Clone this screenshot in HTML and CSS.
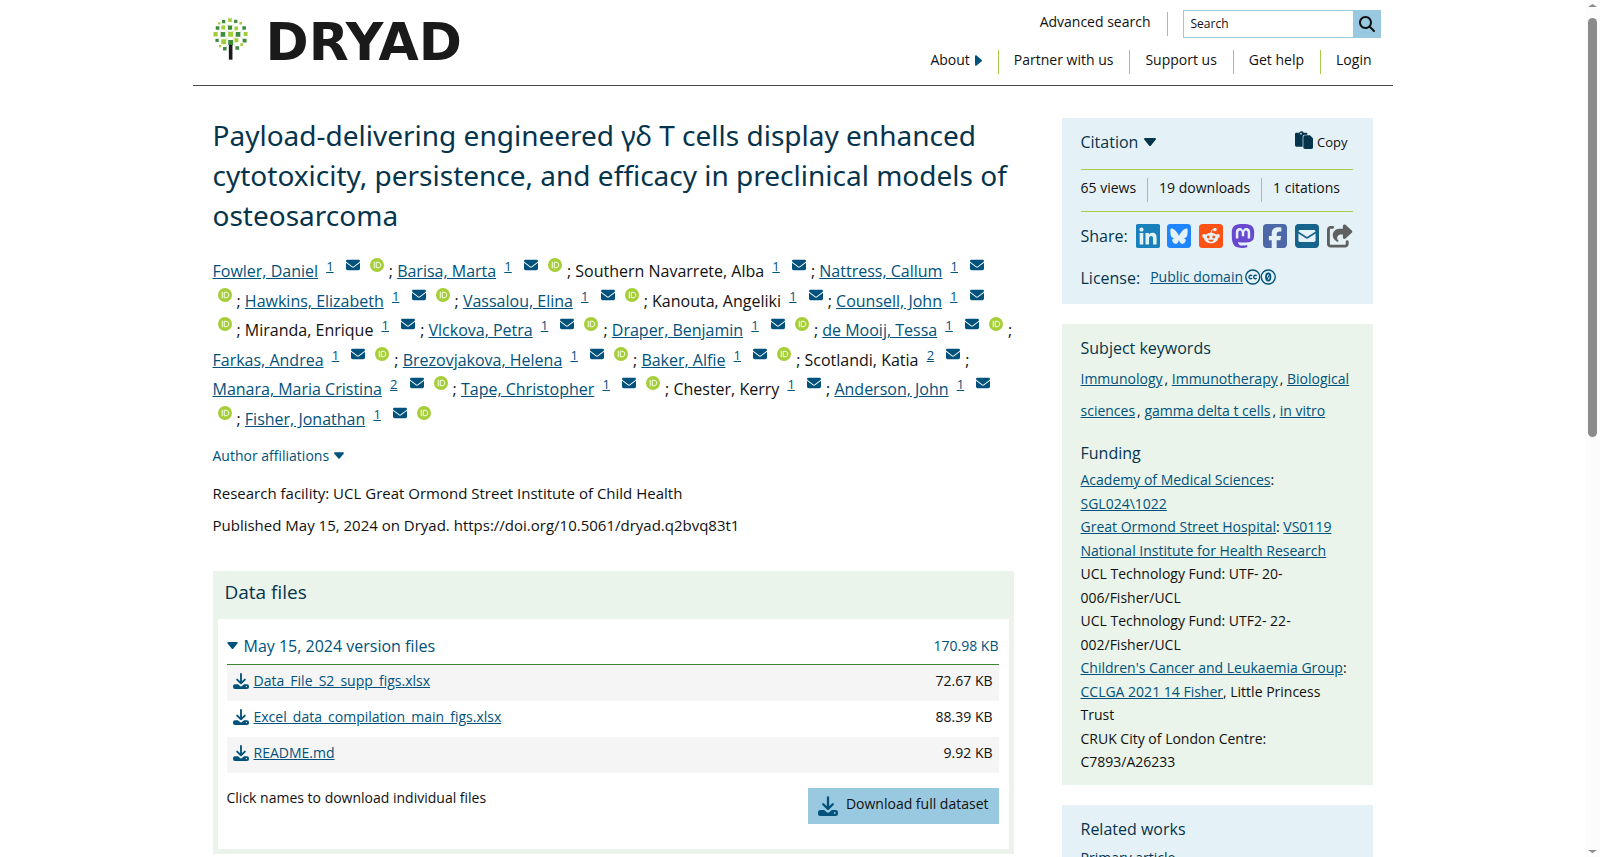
FILE: index.html
```html
<!DOCTYPE html>
<html lang="en">
<head>
<meta charset="utf-8">
<title>Dryad | Payload-delivering engineered γδ T cells</title>
<link rel="stylesheet" href="styles.css">
</head>
<body>
<svg class="sprite" aria-hidden="true">
  <symbol id="mail" viewBox="0 0 512 512"><path d="M48 64C21.5 64 0 85.5 0 112c0 15.1 7.1 29.3 19.2 38.4L236.8 313.6c11.4 8.5 27 8.5 38.4 0L492.8 150.4c12.1-9.1 19.2-23.3 19.2-38.4c0-26.5-21.5-48-48-48H48zM0 176V384c0 35.3 28.7 64 64 64H448c35.3 0 64-28.7 64-64V176L294.4 339.2c-22.8 17.1-54 17.1-76.8 0L0 176z"/></symbol>
  <symbol id="orcid" viewBox="0 0 28 28"><circle cx="14" cy="14" r="14" fill="#a6ce39"/><path d="M8.5 7.500v13M12.500 8.500v11h3.500c3.500 0 5.500-2.500 5.500-5.500s-2-5.500-5.500-5.500z" fill="none" stroke="#fff" stroke-width="1.800"/></symbol>
  <symbol id="down" viewBox="0 0 12 8"><path d="M1.200 0h9.600c1 0 1.500 1.100.8 1.800L7 7.400a1.300 1.300 0 0 1-2 0L.4 1.800C-.3 1.100.2 0 1.200 0z"/></symbol>
  <symbol id="right" viewBox="0 0 8 12"><path d="M0 1.200v9.600c0 1 1.100 1.500 1.800.8L7.400 7a1.300 1.300 0 0 0 0-2L1.800.4C1.100-.3 0 .2 0 1.200z"/></symbol>
  <symbol id="download" viewBox="0 0 20 20"><path d="M10 1.300v11M5.200 8.200l4.800 4.700 4.800-4.700" fill="none" stroke="currentColor" stroke-width="2.300" stroke-linecap="round" stroke-linejoin="round"/><path fill-rule="evenodd" d="M2.500 14h3.700l2.200 2a2.300 2.300 0 0 0 3.200 0l2.200-2h3.700A2.500 2.500 0 0 1 20 16.500v1a2.500 2.500 0 0 1-2.500 2.500h-15A2.500 2.500 0 0 1 0 17.500v-1A2.500 2.500 0 0 1 2.500 14zm14.300 2.100a.9.9 0 1 0 0 1.800.9.9 0 0 0 0-1.800z"/></symbol>
</svg>

<div class="viewport">
<div class="page">
<header class="header">
  <a class="logo" href="#" aria-label="Dryad home">
    <svg class="tree" viewBox="23 23 106 128" aria-hidden="true">
      <path d="M36 53L54 72 76 97 99 73 117 54M55 34L76 53 92 34M36 91L55 73M119 92L99 73M54 52L76 72 94 54M55 95L76 72 94 91M58 116L76 97 96 114" fill="none" stroke="#8fbf6a" stroke-width="1"/>
      <path fill="#a5cd39" d="M69 24h11v11h-11zM38 36h7v7h-7zM103 35h8v8h-8zM48 46h12v12h-12zM88 49h11v11h-11zM24 66h13v13h-13zM69 65h15v15h-15zM116 66h12v12h-12zM48 88h15v15h-15zM88 85h12v12h-12zM106 100h8v8h-8zM41 105h7v7h-7z"/>
      <path fill="#3e8b40" d="M50 29h10v10h-10zM87 28h10v10h-10zM31 48h11v11h-11zM68 46h13v13h-13zM112 48h11v11h-11zM46 66h14v14h-14zM92 66h14v14h-14zM30 86h10v10h-10zM69 90h15v15h-15zM113 86h12v12h-12zM53 111h11v11h-11zM91 109h11v11h-11z"/>
      <path fill="#1a1a1a" d="M71 105h11v45h-11z"/>
    </svg>
    <span class="wordmark">DRYAD</span>
  </a>
  <nav class="menus" aria-label="Main">
    <div class="row top">
      <a href="#">Advanced search</a>
      <form class="search">
        <input type="text" placeholder="Search" aria-label="Search">
        <button type="button" aria-label="Submit search"><svg viewBox="0 0 512 512"><path d="M416 208c0 45.900-14.900 88.300-40 122.700L502.600 457.400c12.500 12.500 12.500 32.800 0 45.300s-32.800 12.500-45.300 0L330.700 376c-34.400 25.200-76.800 40-122.700 40C93.100 416 0 322.900 0 208S93.100 0 208 0S416 93.100 416 208zM208 352a144 144 0 1 0 0-288 144 144 0 1 0 0 288z"/></svg></button>
      </form>
    </div>
    <div class="row bottom">
      <button type="button" class="about">About <svg><use href="#right"/></svg></button>
      <a href="#">Partner with us</a>
      <a href="#">Support us</a>
      <a href="#">Get help</a>
      <a href="#">Login</a>
    </div>
  </nav>
</header>

<div class="columns">
<main class="main">
  <h1>Payload-delivering engineered γδ T cells display enhanced cytotoxicity, persistence, and efficacy in preclinical models of osteosarcoma</h1>
  <p class="authors">
    <a href="#">Fowler, Daniel</a> <sup><a href="#">1</a></sup> <svg class="m"><use href="#mail"/></svg><span class="end"><svg class="o"><use href="#orcid"/></svg>;</span>
    <a href="#">Barisa, Marta</a> <sup><a href="#">1</a></sup> <svg class="m"><use href="#mail"/></svg><span class="end"><svg class="o"><use href="#orcid"/></svg>;</span>
    Southern Navarrete, Alba <sup><a href="#">1</a></sup> <span class="end"><svg class="m"><use href="#mail"/></svg>;</span>
    <a href="#">Nattress, Callum</a> <sup><a href="#">1</a></sup> <svg class="m"><use href="#mail"/></svg><span class="end"><svg class="o"><use href="#orcid"/></svg>;</span>
    <a href="#">Hawkins, Elizabeth</a> <sup><a href="#">1</a></sup> <svg class="m"><use href="#mail"/></svg><span class="end"><svg class="o"><use href="#orcid"/></svg>;</span>
    <a href="#">Vassalou, Elina</a> <sup><a href="#">1</a></sup> <svg class="m"><use href="#mail"/></svg><span class="end"><svg class="o"><use href="#orcid"/></svg>;</span>
    Kanouta, Angeliki <sup><a href="#">1</a></sup> <span class="end"><svg class="m"><use href="#mail"/></svg>;</span>
    <a href="#">Counsell, John</a> <sup><a href="#">1</a></sup> <svg class="m"><use href="#mail"/></svg><br><span class="end"><svg class="o"><use href="#orcid"/></svg>;</span>
    Miranda, Enrique <sup><a href="#">1</a></sup> <span class="end"><svg class="m"><use href="#mail"/></svg>;</span>
    <a href="#">Vlckova, Petra</a> <sup><a href="#">1</a></sup> <svg class="m"><use href="#mail"/></svg><span class="end"><svg class="o"><use href="#orcid"/></svg>;</span>
    <a href="#">Draper, Benjamin</a> <sup><a href="#">1</a></sup> <svg class="m"><use href="#mail"/></svg><span class="end"><svg class="o"><use href="#orcid"/></svg>;</span>
    <a href="#">de Mooij, Tessa</a> <sup><a href="#">1</a></sup> <svg class="m"><use href="#mail"/></svg><span class="end"><svg class="o"><use href="#orcid"/></svg>;</span>
    <a href="#">Farkas, Andrea</a> <sup><a href="#">1</a></sup> <svg class="m"><use href="#mail"/></svg><span class="end"><svg class="o"><use href="#orcid"/></svg>;</span>
    <a href="#">Brezovjakova, Helena</a> <sup><a href="#">1</a></sup> <svg class="m"><use href="#mail"/></svg><span class="end"><svg class="o"><use href="#orcid"/></svg>;</span>
    <a href="#">Baker, Alfie</a> <sup><a href="#">1</a></sup> <svg class="m"><use href="#mail"/></svg><span class="end"><svg class="o"><use href="#orcid"/></svg>;</span>
    Scotlandi, Katia <sup><a href="#">2</a></sup> <span class="end"><svg class="m"><use href="#mail"/></svg>;</span>
    <a href="#">Manara, Maria Cristina</a> <sup><a href="#">2</a></sup> <svg class="m"><use href="#mail"/></svg><span class="end"><svg class="o"><use href="#orcid"/></svg>;</span>
    <a href="#">Tape, Christopher</a> <sup><a href="#">1</a></sup> <svg class="m"><use href="#mail"/></svg><span class="end"><svg class="o"><use href="#orcid"/></svg>;</span>
    Chester, Kerry <sup><a href="#">1</a></sup> <span class="end"><svg class="m"><use href="#mail"/></svg>;</span>
    <a href="#">Anderson, John</a> <sup><a href="#">1</a></sup> <svg class="m"><use href="#mail"/></svg><span class="end"><svg class="o"><use href="#orcid"/></svg>;</span>
    <a href="#">Fisher, Jonathan</a> <sup><a href="#">1</a></sup> <svg class="m"><use href="#mail"/></svg><svg class="o"><use href="#orcid"/></svg>
  </p>
  <button type="button" class="affil">Author affiliations <svg><use href="#down"/></svg></button>
  <p class="meta">Research facility: UCL Great Ormond Street Institute of Child Health</p>
  <p class="meta">Published May 15, 2024 on Dryad. https://doi.org/10.5061/dryad.q2bvq83t1</p>

  <section class="files">
    <h2>Data files</h2>
    <div class="filebox">
      <button type="button" class="version"><svg><use href="#down"/></svg><span>May 15, 2024 version files</span><span class="total">170.98 KB</span></button>
      <table>
        <tr><td><a href="#"><svg><use href="#download"/></svg><span>Data_File_S2_supp_figs.xlsx</span></a></td><td class="size">72.67 KB</td></tr>
        <tr><td><a href="#"><svg><use href="#download"/></svg><span>Excel_data_compilation_main_figs.xlsx</span></a></td><td class="size">88.39 KB</td></tr>
        <tr><td><a href="#"><svg><use href="#download"/></svg><span>README.md</span></a></td><td class="size">9.92 KB</td></tr>
      </table>
      <div class="actions">
        <p>Click names to download individual files</p>
        <button type="button" class="full"><svg><use href="#download"/></svg>Download full dataset</button>
      </div>
    </div>
  </section>
</main>

<aside class="side">
  <section class="card blue">
    <div class="cite">
      <button type="button" class="citation">Citation <svg><use href="#down"/></svg></button>
      <button type="button" class="copy"><svg viewBox="0 0 54 54"><path d="M4 5h9a7 7 0 0 1 13 0h8q3 0 3 3v3H29q-6 0-6 6v30H4q-4 0-4-4V9q0-4 4-4z"/><circle cx="18" cy="8" r="2.500" fill="#e4f1f7"/><path d="M30 13h15l9 9v27q0 5-5 5H30q-5 0-5-5V18q0-5 5-5z"/></svg>Copy</button>
    </div>
    <div class="stats"><span>65 views</span><span>19 downloads</span><span>1 citations</span></div>
    <div class="share">
      <h3>Share:</h3>
      <a class="linkedin" href="#" aria-label="LinkedIn"><svg viewBox="0 32 448 448"><path d="M416 32H31.900C14.300 32 0 46.500 0 64.300v383.400C0 465.500 14.300 480 31.900 480H416c17.600 0 32-14.500 32-32.300V64.300c0-17.800-14.400-32.300-32-32.300zM135.400 416H69V202.200h66.500V416zm-33.200-243c-21.300 0-38.500-17.300-38.500-38.500S80.900 96 102.200 96c21.200 0 38.500 17.300 38.500 38.500 0 21.300-17.200 38.500-38.500 38.500zm282.100 243h-66.400V312c0-24.800-.5-56.700-34.500-56.700-34.600 0-39.900 27-39.900 54.900V416h-66.400V202.200h63.700v29.200h.9c8.900-16.800 30.600-34.500 62.900-34.500 67.200 0 79.700 44.300 79.700 101.900V416z"/></svg></a>
      <a href="#" aria-label="Bluesky"><svg viewBox="0 0 448 448"><rect width="448" height="448" rx="64" fill="#1f86ff"/><path transform="translate(60 64) scale(.64)" fill="#e4f1f7" d="M111.800 62.200C170.200 105.900 233 194.700 256 242.400c23-47.600 85.800-136.400 144.200-180.200c42.100-31.600 110.300-56 110.300 21.800c0 15.500-8.900 130.500-14.100 149.200C478.200 298 412 314.600 353.100 304.500c102.900 17.500 129.100 75.500 72.500 133.500c-107.400 110.200-154.300-27.600-166.300-62.900c-1.700-4.900-2.600-7.800-3.300-7.800s-1.600 3-3.300 7.800c-12 35.300-59 173.100-166.300 62.900c-56.500-58-30.400-116 72.500-133.500C100 314.600 33.800 298 15.700 233.100C10.400 214.400 1.500 99.400 1.500 83.900c0-77.800 68.200-53.400 110.300-21.800z"/></svg></a>
      <a href="#" aria-label="Reddit"><svg viewBox="0 0 24 24"><rect width="24" height="24" rx="3.500" fill="#ff5216"/><g fill="#e4f1f7"><ellipse cx="12" cy="14" rx="7" ry="5.300"/><circle cx="5.200" cy="12" r="2"/><circle cx="18.800" cy="12" r="2"/><circle cx="16" cy="5.500" r="1.700"/></g><path d="M12 9q0-3.500 3-3.800" fill="none" stroke="#e4f1f7" stroke-width="1"/><circle cx="9.300" cy="13" r="1.400" fill="#ff5216"/><circle cx="14.700" cy="13" r="1.400" fill="#ff5216"/><path d="M9 15.800h6q-.8 1.900-3 1.900t-3-1.900z" fill="#ff5216"/></svg></a>
      <a class="mastodon" href="#" aria-label="Mastodon"><svg viewBox="0 32 448 448"><path d="M433 179.110c0-97.200-63.710-125.700-63.710-125.700-62.520-28.700-228.560-28.400-290.480 0 0 0-63.720 28.500-63.720 125.700 0 115.700-6.600 259.400 105.630 289.100 40.510 10.700 75.320 13 103.330 11.400 50.810-2.800 79.320-18.100 79.320-18.100l-1.700-36.900s-36.310 11.400-77.120 10.100c-40.410-1.400-83-4.400-89.630-54a102.540 102.540 0 0 1-.9-13.900c85.630 20.900 158.650 9.100 178.750 6.700 56.120-6.700 105-41.300 111.230-72.900 9.800-49.800 9-121.500 9-121.500zm-75.120 125.200h-46.630v-114.200c0-49.700-64-51.600-64 6.900v62.500h-46.330V197c0-58.500-64-56.600-64-6.900v114.200H90.190c0-122.100-5.200-147.900 18.410-175 25.900-28.900 79.820-30.800 103.830 6.100l11.600 19.500 11.600-19.500c24.110-37.100 78.120-34.800 103.830-6.100 23.710 27.300 18.400 53 18.400 175z"/></svg></a>
      <a class="facebook" href="#" aria-label="Facebook"><svg viewBox="0 32 448 448"><path d="M64 32C28.700 32 0 60.700 0 96V416c0 35.300 28.700 64 64 64h98.200V334.200H109.400V256h52.800V222.300c0-87.100 39.400-127.500 125-127.500c16.200 0 44.200 3.200 55.700 6.400V172c-6-.6-16.500-1-29.600-1c-42 0-58.200 15.900-58.200 57.200V256h83.600l-14.400 78.200H255V480H384c35.300 0 64-28.700 64-64V96c0-35.300-28.700-64-64-64H64z"/></svg></a>
      <a class="email" href="#" aria-label="Email"><svg viewBox="0 32 448 448"><path d="M64 32C28.700 32 0 60.700 0 96V416c0 35.300 28.700 64 64 64H384c35.300 0 64-28.700 64-64V96c0-35.300-28.700-64-64-64H64zM218 271.700L64.200 172.400C66 156.400 79.500 144 96 144H352c16.500 0 30 12.400 31.800 28.400L230 271.700c-1.800 1.200-3.900 1.800-6 1.800s-4.200-.6-6-1.800zm29.400 26.900L384 210.400V336c0 17.700-14.300 32-32 32H96c-17.700 0-32-14.300-32-32V210.400l136.600 88.200c7 4.500 15.100 6.900 23.400 6.900s16.400-2.400 23.400-6.900z"/></svg></a>
      <a class="more" href="#" aria-label="More sharing options"><svg viewBox="0 0 576 512"><path d="M352 224H305.500c-45 0-81.500 36.500-81.500 81.500c0 22.300 10.300 34.300 19.200 40.500c6.800 4.700 12.800 12 12.800 20.300c0 9.800-8 17.800-17.800 17.800h-2.500c-2.400 0-4.800-.4-7.100-1.400C210.800 374.800 128 333.400 128 240c0-79.500 64.500-144 144-144h80V34.700C352 15.500 367.500 0 386.700 0c8.600 0 16.800 3.200 23.200 8.900L548.100 133.300c7.600 6.800 11.900 16.500 11.900 26.700s-4.300 19.900-11.900 26.700l-139 125.100c-5.900 5.300-13.500 8.200-21.400 8.200H384c-17.700 0-32-14.300-32-32V224zM80 96c-8.800 0-16 7.200-16 16V432c0 8.800 7.200 16 16 16H400c8.800 0 16-7.200 16-16V384c0-17.700 14.300-32 32-32s32 14.300 32 32v48c0 44.200-35.800 80-80 80H80c-44.200 0-80-35.800-80-80V112C0 67.800 35.800 32 80 32h48c17.700 0 32 14.300 32 32s-14.300 32-32 32H80z"/></svg></a>
    </div>
    <div class="license">
      <h3>License:</h3>
      <a href="#"><span>Public domain</span><svg viewBox="0 0 32 16" aria-hidden="true"><g fill="none" stroke="#00527c"><circle cx="8" cy="8" r="7.200" stroke-width="1.400"/><path d="M7.300 6.800a1.800 1.800 0 1 0 0 2.400M12.100 6.800a1.800 1.800 0 1 0 0 2.400" stroke-width="1.400"/><circle cx="24" cy="8" r="7.200" stroke-width="1.400"/><ellipse cx="24" cy="8" rx="2.300" ry="3.700" stroke-width="1.800"/><path d="M22.800 10l2.400-4" stroke-width="1.200"/></g></svg></a>
    </div>
  </section>

  <section class="card green">
    <h3>Subject keywords</h3>
    <p class="keywords"><a href="#">Immunology</a>, <a href="#">Immunotherapy</a>, <a href="#">Biological sciences</a>, <a href="#">gamma delta t cells</a>, <a href="#">in vitro</a></p>
    <h3>Funding</h3>
    <ul class="funding">
      <li><a href="#">Academy of Medical Sciences</a>: <a href="#">SGL024\1022</a></li>
      <li><a href="#">Great Ormond Street Hospital</a>: <a href="#">VS0119</a></li>
      <li><a href="#">National Institute for Health Research</a></li>
      <li>UCL Technology Fund: UTF- 20-006/Fisher/UCL</li>
      <li>UCL Technology Fund: UTF2- 22-002/Fisher/UCL</li>
      <li><a href="#">Children's Cancer and Leukaemia Group</a>: <a href="#">CCLGA 2021 14 Fisher</a>, Little Princess Trust</li>
      <li>CRUK City of London Centre: C7893/A26233</li>
    </ul>
  </section>

  <section class="card blue">
    <h3>Related works</h3>
    <h4>Primary article</h4>
  </section>
</aside>
</div>
</div>
<div class="scroll" aria-hidden="true">
  <svg viewBox="0 0 9 3"><path d="M0 3L4.500 0 9 3z"/></svg>
  <div class="track"><div class="thumb"></div></div>
  <svg viewBox="0 0 9 3"><path d="M0 0L4.500 3 9 0z"/></svg>
</div>
</div>
</body>
</html>
```
FILE: styles.css
```css
* { box-sizing: border-box; }

body {
  margin: 0;
  background: #fff;
  color: #111;
  font: 14px/24px "Open Sans", "Noto Sans", sans-serif;
}

h1, h2, h3, h4, p, ul, form { margin: 0; padding: 0; font-weight: 400; }
a { color: #00527c; }
svg { fill: currentColor; flex: none; }
button {
  margin: 0;
  padding: 0;
  border: 0;
  background: none;
  color: inherit;
  font: inherit;
  cursor: pointer;
}
.sprite { display: none; }

.viewport { display: flex; height: 100vh; }
.page { flex: 1; min-width: 0; overflow-y: auto; scrollbar-width: none; }

.scroll {
  display: flex;
  flex-direction: column;
  align-items: center;
  gap: 7px;
  width: 15px;
  padding: 4px 0;
  background: #fcfcfc;
  color: #8b8b8b;
}
.scroll svg { width: 9px; height: 3px; }
.track { flex: 1; width: 9px; padding: 4px 0; }
.thumb { height: 51%; border-radius: 5px; background: #8b8b8b; }

/* Header */
.header {
  display: flex;
  justify-content: space-between;
  max-width: 1200px;
  margin: 0 auto;
  padding: 10px 12px 11px 20px;
  border-bottom: 1px solid #4a4a4a;
}
.logo {
  display: flex;
  align-items: flex-start;
  gap: 18px;
  padding-top: 8px;
  color: #1a1a1a;
  text-decoration: none;
}
.tree { width: 35px; height: 42px; }
.wordmark { font: 700 52px/48px "DejaVu Sans", sans-serif; }
.menus { display: flex; flex-direction: column; align-items: flex-end; gap: 12px; }
.menus a { color: #111; text-decoration: none; }
.row { display: flex; }
.row > * + * { position: relative; }
.top { gap: 32px; }
.top > form::before, .bottom > a::before {
  content: "";
  position: absolute;
  top: 0;
  left: -16px;
  width: 1px;
  height: 24px;
  background: #a7cb4b;
}
.top > form::before { top: 2px; }
.bottom { gap: 32px; padding-right: 9px; }
.bottom > * { line-height: 20px; height: 24px; }
.about { display: flex; align-items: center; gap: 5px; height: 20px; }
.about svg { width: 7px; height: 11px; color: #00527c; }
.search { display: flex; height: 28px; }
.search input {
  width: 170px;
  padding: 0 0 2px 7px;
  border: 1px solid #99c9e0;
  border-right: 0;
  border-radius: 0;
  background: #fff;
  font: 12px "Open Sans", sans-serif;
}
.search input::placeholder { color: #111; opacity: 1; }
.search button { display: grid; place-items: center; width: 28px; background: #99c9e0; }
.search svg { width: 16px; height: 16px; }

/* Columns */
.columns {
  display: grid;
  grid-template-columns: minmax(0, 801px) 311px;
  justify-content: space-between;
  max-width: 1200px;
  margin: 0 auto;
  padding: 32px 20px 20px;
}
h1 {
  margin-top: -3px;
  color: #06344c;
  font-family: "Noto Sans", "Open Sans", sans-serif;
  font-size: 28px;
  line-height: 40px;
}

.authors { margin: 22px 0 9px; font-size: 16px; line-height: 1.85; }
.authors sup { margin: 0 3px 0 4px; font-size: 13px; line-height: 0; vertical-align: 6px; }
.authors svg { width: 14px; height: 14px; margin: 0 5px; }
.authors .m { color: #00527c; vertical-align: 5px; }
.authors .o { vertical-align: 5px; }
.end { white-space: nowrap; }

.affil { display: flex; align-items: center; gap: 5px; margin-bottom: 9px; color: #00527c; }
.affil svg { width: 10px; height: 7px; }
.meta { font-size: 15px; line-height: 32px; }

.files { margin-top: 30px; padding: 0 5px 5px; background: #eaf4ea; }
.files h2 { padding: 9px 7px 15px; color: #06344c; font-size: 19px; line-height: 24px; }
.filebox { padding: 15px 10px 25px 9px; background: #fff; }
.version {
  display: flex;
  align-items: center;
  gap: 6px;
  width: 100%;
  padding-bottom: 6px;
  border-bottom: 1px solid #3f8236;
  color: #00527c;
  font-size: 16px;
}
.version svg { width: 11px; height: 7px; }
.total { margin-left: auto; font-size: 14px; }
table { width: 100%; border-collapse: collapse; }
td { padding: 4px 6px 8px; }
tr:nth-child(odd) { background: #f5f5f5; }
td a { display: flex; align-items: center; gap: 5px; text-decoration: none; }
td a span { text-decoration: underline; }
td svg { width: 16px; height: 16px; }
.size { text-align: right; }
.actions { display: flex; justify-content: space-between; align-items: flex-start; padding-top: 15px; }
.actions p { line-height: 20px; }
.full {
  display: flex;
  gap: 8px;
  height: 36px;
  padding: 4px 10px;
  background: #99c9e0;
}
.full svg { width: 20px; height: 20px; margin-top: 4px; color: #00527c; }

/* Sidebar */
.side { display: flex; flex-direction: column; gap: 20px; }
.card { padding: 12px 20px 11px 19px; }
.blue { background: #e4f1f7; }
.green { background: #eaf4ea; }
.side h3 { color: #06344c; font-size: 16px; line-height: 24px; }
.cite { display: flex; justify-content: space-between; align-items: center; }
.citation { display: flex; align-items: center; gap: 6px; color: #06344c; font-size: 16px; }
.citation svg { width: 12px; height: 8px; }
.copy { display: flex; align-items: center; gap: 4px; margin-right: 5px; font-size: 13px; }
.copy svg { width: 18px; height: 18px; margin-bottom: 4px; color: #06344c; }
.stats {
  display: flex;
  margin-top: 15px;
  padding: 8px 0 9px;
  border: solid #a7cb4b;
  border-width: 1px 0;
  line-height: 20px;
}
.stats span { height: 24px; }
.stats span + span { margin-left: 11px; padding-left: 11px; border-left: 1px solid #a7cb4b; }
.share { display: flex; justify-content: space-between; margin-top: 12px; }
.share a, .share svg { display: block; height: 24px; }
.share a svg { width: 24px; }
.share .linkedin { color: #1881bb; }
.share .mastodon { color: #6748cf; }
.share .facebook { color: #4d68a6; }
.share .email { color: #16648b; }
.share .more { color: #5f6160; }
.share .more svg { width: 26px; }
.license { display: flex; gap: 10px; margin: 18px 0 3px; }
.license a { display: flex; align-items: center; gap: 2px; height: 22px; text-decoration: none; }
.license span { text-decoration: underline; }
.license svg { width: 31px; height: 16px; }
.keywords { margin: 3px 0 14px; line-height: 32px; }
.keywords a { margin-right: 2px; }
.funding { margin-top: 3px; list-style: none; line-height: 1.68; }
.side h4 { margin-top: 5px; color: #06344c; font-size: 14px; }
```
